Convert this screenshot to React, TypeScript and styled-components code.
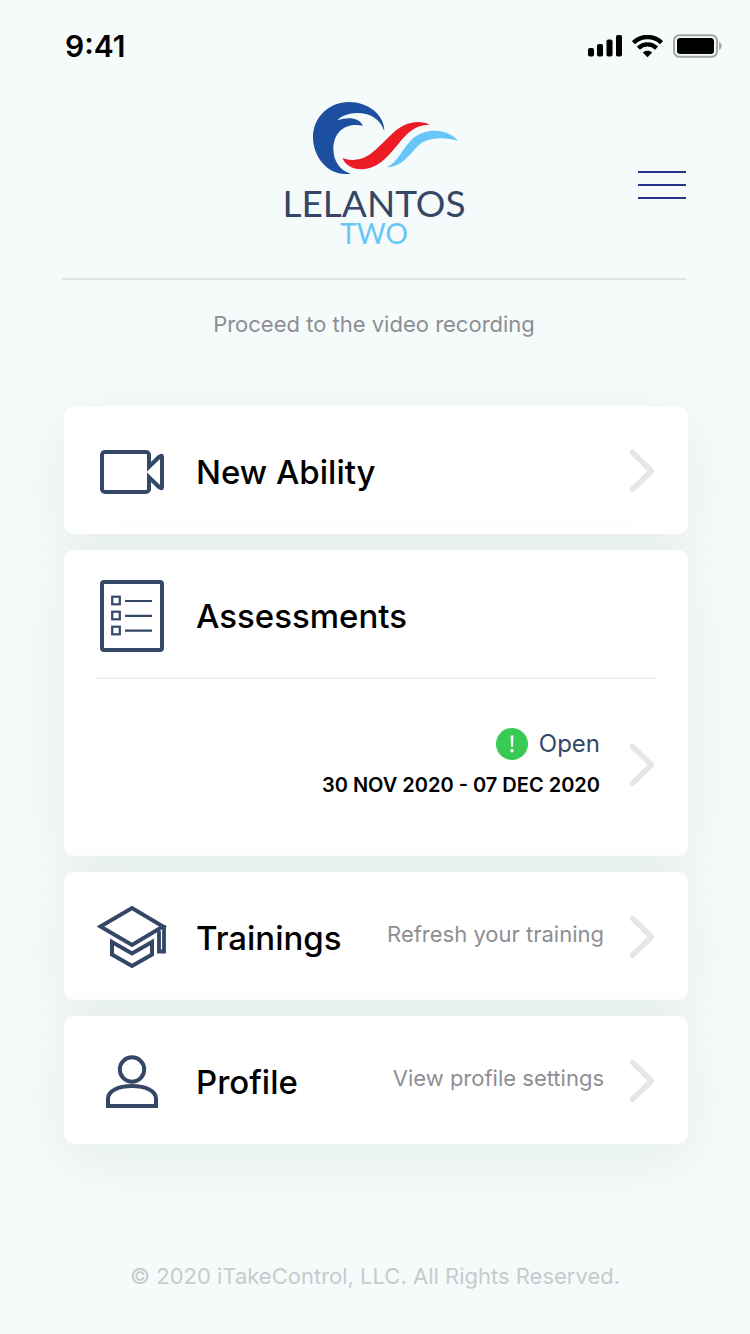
import React from "react";
import styled, { createGlobalStyle } from "styled-components";

const ink = "#354766";

const GlobalStyle = createGlobalStyle`
  *, *::before, *::after { box-sizing: border-box; }
  body {
    margin: 0;
    background: #f5fbfb;
    font-family: Inter, "Liberation Sans", sans-serif;
    color: #000;
  }
`;

const Page = styled.div`
  min-height: 100vh;
  display: flex;
  flex-direction: column;
`;

const StatusBar = styled.div`
  display: flex;
  justify-content: space-between;
  align-items: center;
  padding: 28px 28px 0 65px;
`;

const Clock = styled.time`
  font-size: 30px;
  line-height: 36px;
  font-weight: 600;
`;

const StatusIcons = styled.div`
  display: flex;
  align-items: center;
  gap: 10px;
`;

const Header = styled.header`
  display: grid;
  grid-template-columns: 1fr auto 1fr;
  align-items: center;
  margin: 28px 64px 0 62px;
  padding: 9px 0 32px;
  border-bottom: 2px solid #dee5e5;
`;

const Logo = styled.a`
  grid-column: 2;
  display: flex;
  flex-direction: column;
  align-items: center;
  text-decoration: none;
  font-family: Lato, "Liberation Sans", sans-serif;
`;

const LogoMark = styled.svg`
  display: block;
  margin-bottom: 11px;
`;

const LogoName = styled.span`
  font-size: 37px;
  line-height: 34px;
  color: ${ink};
`;

const LogoSub = styled.span`
  font-size: 28px;
  line-height: 26px;
  color: #66c6f9;
`;

const MenuButton = styled.button`
  justify-self: end;
  display: flex;
  flex-direction: column;
  gap: 11px;
  width: 48px;
  padding: 22px 0 0;
  border: 0;
  background: none;
  cursor: pointer;
`;

const MenuLine = styled.span`
  height: 2px;
  width: 100%;
  background: #27348b;
`;

const Main = styled.main`
  padding-top: 30px;
`;

const Intro = styled.p`
  margin: 0 64px 68px 62px;
  font-size: 22px;
  line-height: 28px;
  text-align: center;
  color: #8e8e93;
`;

const CardList = styled.div`
  display: flex;
  flex-direction: column;
  gap: 16px;
  padding: 0 62px 0 64px;
`;

const Card = styled.section`
  border-radius: 10px;
  background: #fff;
  box-shadow: 0 16px 60px rgba(20, 32, 28, 0.065);
`;

const rowBase = `
  display: flex;
  align-items: center;
  color: inherit;
  text-decoration: none;
`;

const CardLink = styled.a`
  ${rowBase}
  min-height: 128px;
  padding: 0 32px;
`;

const CardHead = styled.div`
  ${rowBase}
  min-height: 129px;
  margin: 0 32px;
  border-bottom: 2px solid #efefef;
`;

const IconSvg = styled.svg`
  flex: none;
  margin-right: 28px;
`;

const Title = styled.h2`
  margin: 0;
  padding-top: 4px;
  font-size: 33px;
  line-height: 40px;
  font-weight: 500;
`;

const Note = styled.span`
  margin-left: auto;
  padding-bottom: 4px;
  font-size: 22px;
  line-height: 28px;
  color: #8e8e93;
`;

const ChevronSvg = styled.svg<{ $gap: number; $push: boolean }>`
  flex: none;
  margin-left: ${(p) => (p.$push ? "auto" : `${p.$gap}px`)};
`;

const PeriodLink = styled.a`
  ${rowBase}
  min-height: 177px;
  padding: 0 32px 8px;
  justify-content: flex-end;
`;

const Period = styled.div`
  display: flex;
  flex-direction: column;
  align-items: flex-end;
  gap: 11px;
`;

const Status = styled.div`
  display: flex;
  align-items: center;
  gap: 11px;
  font-size: 24px;
  line-height: 32px;
  color: ${ink};
`;

const Dates = styled.div`
  font-size: 20px;
  line-height: 28px;
  font-weight: 600;
`;

const Footer = styled.footer`
  margin-top: auto;
  padding: 64px 32px 44px;
  font-size: 22px;
  line-height: 28px;
  text-align: center;
  color: #c7cbcc;
`;

const Chevron = ({ gap = 24, push = false }: { gap?: number; push?: boolean }) => (
  <ChevronSvg $gap={gap} $push={push} width="28" height="44" viewBox="0 0 28 44" fill="none" stroke="#e6e6e6" strokeWidth="5.4" strokeLinecap="round" strokeLinejoin="round" aria-hidden="true">
    <path d="M4.500 4.300 23.500 23 4.500 41.300" />
  </ChevronSvg>
);

const Icon = ({ children }: { children: React.ReactNode }) => (
  <IconSvg width="72" height="76" viewBox="0 -2 72 76" fill="none" stroke={ink} strokeWidth="4" aria-hidden="true">
    {children}
  </IconSvg>
);

const VideoIcon = () => (
  <Icon>
    <rect x="6" y="18" width="47" height="40" rx="3" />
    <path d="M54 29 61.500 21.500Q68 17 68 24V52Q68 59 61.500 54.500L54 47Z" fill={ink} stroke="none" />
    <path d="M50.500 38 64 25V51Z" fill="#fff" stroke="none" />
  </Icon>
);

const ListIcon = () => (
  <Icon>
    <rect x="6" y="4" width="60" height="68" rx="2" />
    <g strokeWidth="2.2">
      <rect x="16.200" y="18.700" width="7.600" height="7.600" />
      <rect x="16.200" y="33.700" width="7.600" height="7.600" />
      <rect x="16.200" y="48.700" width="7.600" height="7.600" />
      <path d="M29 23H56M29 37.800H56M29 52.600H56" />
    </g>
  </Icon>
);

const CapIcon = () => (
  <Icon>
    <path d="M4.500 26.500 36 8 67 26.500 36 45Z" />
    <path d="M68 25V51.500H63V31" strokeWidth="3.800" />
    <path d="M16 42 36 53.500 56 42V54.500L36 66 16 54.500Z" />
  </Icon>
);

const PersonIcon = () => (
  <Icon>
    <circle cx="36" cy="25.500" r="12.200" />
    <path d="M12 62V55C12 47 22 42 36 42S60 47 60 55V62Z" />
  </Icon>
);

export default function App() {
  return (
    <>
      <GlobalStyle />
      <Page>
        <StatusBar>
          <Clock>9:41</Clock>
          <StatusIcons>
            <svg width="34" height="22" viewBox="0 0 34 22" aria-label="Signal">
              <rect x="0" y="13" width="6" height="8.500" rx="1.800" />
              <rect x="9" y="9" width="6" height="12.500" rx="1.800" />
              <rect x="18.500" y="4.500" width="6" height="17" rx="1.800" />
              <rect x="28" y="0" width="6" height="21.500" rx="1.800" />
            </svg>
            <svg width="31" height="23" viewBox="0 0 31 23" fill="none" stroke="#000" strokeWidth="4.400" aria-label="Wi-Fi">
              <path d="M1.500 7.700C9.300.100 21.700.100 29.500 7.700" />
              <path d="M6.400 13.100C11.600 8.100 19.400 8.100 24.600 13.100" />
              <path d="M10.800 17.600C13.500 15 17.500 15 20.200 17.600L15.500 22.300Z" fill="#000" stroke="none" />
            </svg>
            <svg width="49" height="24" viewBox="0 0 49 24" aria-label="Battery">
              <rect x="1" y="1.200" width="43" height="21.600" rx="5.500" fill="none" stroke="#a3a7a7" strokeWidth="2" />
              <rect x="4" y="4" width="37" height="16" rx="3.200" />
              <path d="M46 8C49.500 9.300 49.500 14.700 46 16Z" fill="#a3a7a7" />
            </svg>
          </StatusIcons>
        </StatusBar>

        <Header>
          <Logo href="#home">
            <LogoMark width="170" height="74" viewBox="58 33 510 222" aria-hidden="true">
              <path fill="#1c4f9f" d="M243 251C180 262 130 205 130 142C130 80 180 36 238 36C295 36 345 75 344 123C330 85 300 69 262 69C238 69 215 78 203 91C235 80 268 82 280 107C255 102 228 106 210 124C180 155 182 232 243 251Z" />
              <path fill="#ed1c24" d="M219 204C245 215 280 210 305 190C340 162 370 122 400 107C430 92 460 93 480 104C455 104 435 112 415 130C385 158 355 208 320 226C275 250 229 235 219 204Z" />
              <path fill="#66c6f9" d="M351 232C385 217 400 172 430 145C470 112 535 115 565 153C530 142 490 142 460 156C430 174 405 232 351 232Z" />
            </LogoMark>
            <LogoName>LELANTOS</LogoName>
            <LogoSub>TWO</LogoSub>
          </Logo>
          <MenuButton type="button" aria-label="Menu">
            <MenuLine />
            <MenuLine />
            <MenuLine />
          </MenuButton>
        </Header>

        <Main>
          <Intro>Proceed to the video recording</Intro>
          <CardList>
            <Card>
              <CardLink href="#ability">
                <VideoIcon />
                <Title>New Ability</Title>
                <Chevron push />
              </CardLink>
            </Card>
            <Card>
              <CardHead>
                <ListIcon />
                <Title>Assessments</Title>
              </CardHead>
              <PeriodLink href="#assessment">
                <Period>
                  <Status>
                    <svg width="32" height="32" viewBox="0 0 32 32" aria-hidden="true">
                      <circle cx="16" cy="16" r="16" fill="#38ca52" />
                      <path d="M14.500 7.500H17.500L16.900 19H15.100Z" fill="#fff" />
                      <circle cx="16" cy="22.800" r="1.700" fill="#fff" />
                    </svg>
                    Open
                  </Status>
                  <Dates>30 NOV 2020 - 07 DEC 2020</Dates>
                </Period>
                <Chevron gap={28} />
              </PeriodLink>
            </Card>
            <Card>
              <CardLink href="#trainings">
                <CapIcon />
                <Title>Trainings</Title>
                <Note>Refresh your training</Note>
                <Chevron />
              </CardLink>
            </Card>
            <Card>
              <CardLink href="#profile">
                <PersonIcon />
                <Title>Profile</Title>
                <Note>View profile settings</Note>
                <Chevron />
              </CardLink>
            </Card>
          </CardList>
        </Main>

        <Footer>© 2020 iTakeControl, LLC. All Rights Reserved.</Footer>
      </Page>
    </>
  );
}
